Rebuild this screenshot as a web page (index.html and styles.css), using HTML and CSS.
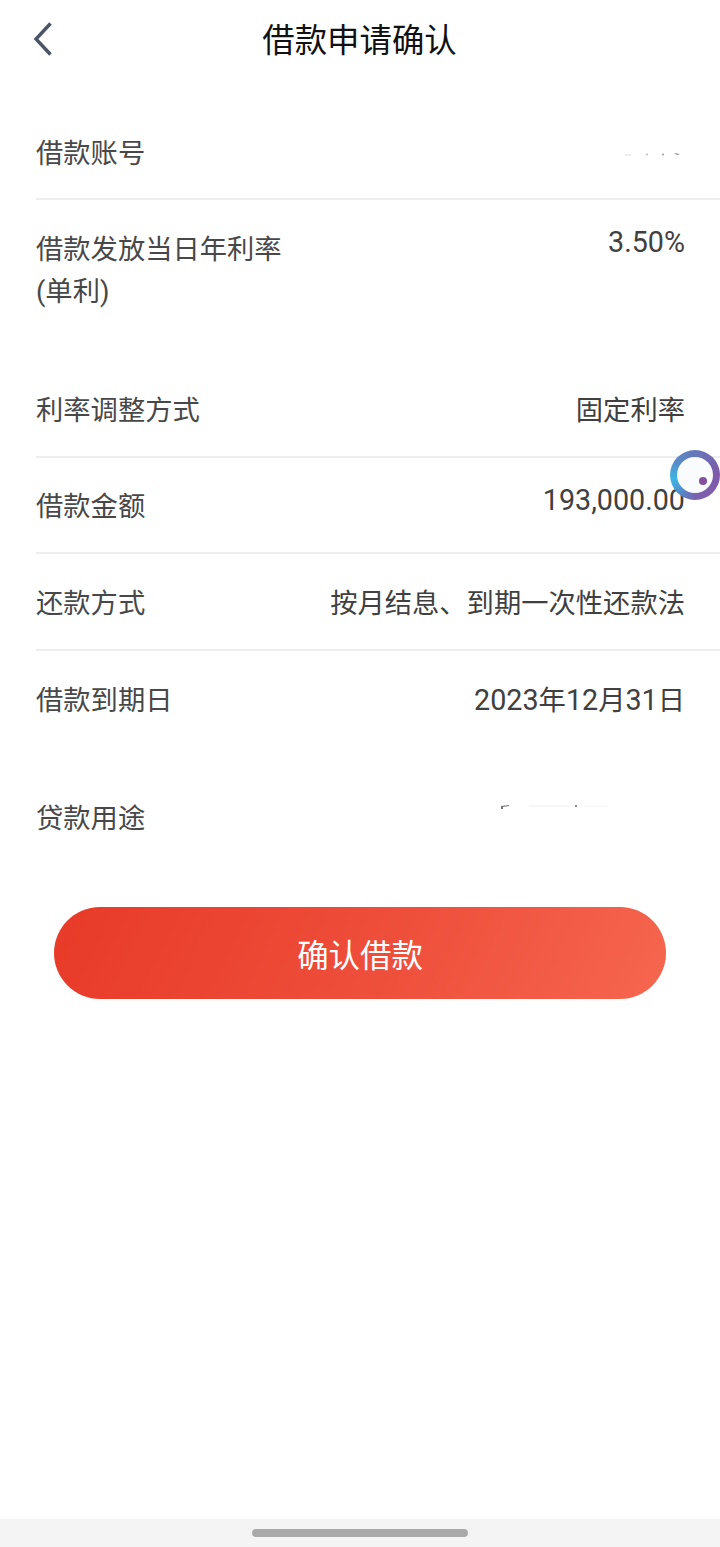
FILE: index.html
```html
<!DOCTYPE html>
<html lang="zh-CN">
<head>
<meta charset="utf-8">
<title>借款申请确认</title>
<link rel="stylesheet" href="styles.css">
</head>
<body>
<div class="page">
  <header class="nav">
    <svg class="back" width="24" height="36" viewBox="0 0 24 36" aria-hidden="true"><path d="M18.5 2.5 4 18l14.500 15.500" fill="none" stroke="#4a5568" stroke-width="3.400"/></svg>
    <h1 class="title">借款申请确认</h1>
  </header>
  <main class="list">
    <div class="row row-account line">
      <span class="label">借款账号</span>
      <svg class="specks" width="60" height="8" viewBox="0 0 60 8" aria-hidden="true"><path d="M0 5h6" stroke="#ddd"/><circle cx="22" cy="4.500" r="1" fill="#bbb"/><circle cx="38" cy="4.500" r="1" fill="#999"/><path d="M49 3l6 1-3 1z" fill="#888"/></svg>
    </div>
    <div class="row row-rate">
      <span class="label rate-label">借款发放当日年利率<br>(单利)</span>
      <span class="value rate-value num">3.50%</span>
    </div>
    <div class="row row-adjust line">
      <span class="label">利率调整方式</span>
      <span class="value">固定利率</span>
    </div>
    <div class="row row-amount line">
      <span class="label">借款金额</span>
      <span class="value up num">193,000.00</span>
    </div>
    <div class="row row-repay line">
      <span class="label">还款方式</span>
      <span class="value">按月结息、到期一次性还款法</span>
    </div>
    <div class="row row-due">
      <span class="label">借款到期日</span>
      <span class="value"><span class="num">2023</span>年<span class="num">12</span>月<span class="num">31</span>日</span>
    </div>
    <div class="row row-purpose">
      <span class="label">贷款用途</span>
      <svg class="specks-b" width="116" height="8" viewBox="0 0 116 8" aria-hidden="true"><path d="M2 6V3l8-1v1l-6 1v2z" fill="#777"/><path d="M30 3h40" stroke="#eee"/><circle cx="77" cy="3" r="1" fill="#666"/><path d="M85 3h24" stroke="#f2f2f2"/></svg>
    </div>
  </main>
  <button class="confirm" type="button">确认借款</button>
  <div class="spacer"></div>
  <footer class="home"><span class="pill"></span></footer>
  <div class="float-ball"><span class="float-inner"><span class="float-dot"></span></span></div>
</div>
</body>
</html>
```

FILE: styles.css
```css
* { box-sizing: border-box; }
html, body { margin: 0; padding: 0; background: #fff; }
body { font-family: Roboto, "Noto Sans CJK SC", sans-serif; }
.page { position: relative; width: 720px; height: 1547px; display: flex; flex-direction: column; overflow: hidden; background: #fff; }

.nav { height: 78px; padding-top: 4px; display: flex; align-items: center; justify-content: center; position: relative; flex: none; }
.back { position: absolute; left: 32px; top: 21px; }
.title { margin: 0 1px 0 0; font-size: 32.4px; line-height: 74px; font-weight: 400; color: #111; }

.list { margin-left: 36px; flex: none; }
.row { display: flex; justify-content: space-between; align-items: center; padding-right: 35px; font-size: 27.3px; line-height: 40px; }
.line { border-bottom: 2px solid #eee; }
.label { color: #484848; }
.value { color: #404040; }
.num { font-size: 28.7px; }
.up { position: relative; top: -7px; }

.row-account { height: 122px; padding-top: 42px; padding-bottom: 10px; }
.specks { position: relative; top: 0; }
.row-rate { height: 133px; align-items: flex-start; padding-top: 29px; }
.rate-label { line-height: 42px; }
.rate-value { position: relative; top: -7px; }
.row-adjust { height: 125px; padding-top: 44px; padding-bottom: 12px; }
.row-amount { height: 96px; padding-top: 3px; }
.row-repay { height: 97px; padding-top: 5px; }
.row-due { height: 98px; padding-top: 1px; }
.row-purpose { height: 120px; padding-top: 20px; }
.specks-b { position: relative; top: -12px; margin-right: 70px; }

.confirm { display: block; flex: none; width: 612px; height: 92px; margin: 38px 0 0 54px; border: 0; border-radius: 46px; background: linear-gradient(115deg, #e83a28 0%, #ee4f3b 55%, #f6664f 100%); color: #fff; font-family: inherit; font-size: 31.4px; padding: 0; }

.spacer { flex: 1; }
.home { height: 28px; flex: none; background: #f4f4f4; display: flex; align-items: center; justify-content: center; }
.pill { width: 216px; height: 8px; border-radius: 4px; background: #a9a9a9; }

.float-ball { position: absolute; left: 670px; top: 450px; width: 50px; height: 50px; border-radius: 50%; padding: 7px; background: conic-gradient(#6578bb 0deg, #8058a8 90deg, #7a62b0 180deg, #4f90cc 225deg, #3eb4e4 260deg, #5a88c6 310deg, #6578bb 360deg); }
.float-inner { display: block; position: relative; width: 36px; height: 36px; border-radius: 50%; background: #fafbfd; }
.float-dot { position: absolute; left: 22px; top: 20px; width: 8px; height: 8px; border-radius: 50%; background: #84509e; }
```
